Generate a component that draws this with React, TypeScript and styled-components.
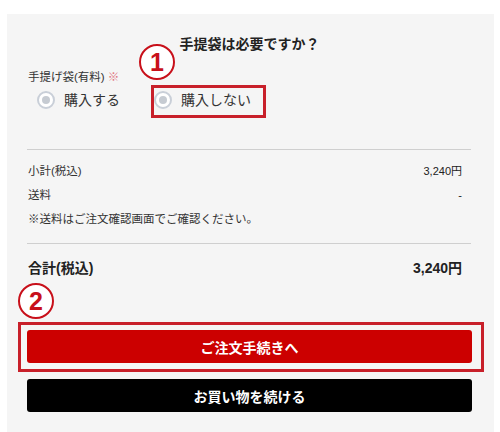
import React from "react";
import styled, { createGlobalStyle } from "styled-components";

const Global = createGlobalStyle`
  html, body { margin: 0; padding: 0; background: #fff; }
  body { font-family: "Liberation Sans", "Noto Sans CJK JP", sans-serif; color: #333; }
`;

const Page = styled.div`
  padding: 14px 6px 0 7px;
`;

const Panel = styled.section`
  position: relative;
  background: #f5f5f5;
  padding: 20px 22px 20px 20px;
`;

const Title = styled.h2`
  margin: 0;
  text-align: center;
  font-size: 14px;
  line-height: 20px;
  font-weight: bold;
  color: #222;
`;

const Label = styled.div`
  margin-top: 14px;
  font-size: 11.5px;
  line-height: 18px;
  padding-left: 1px;
`;

const Mark = styled.span`
  color: #e27682;
`;

const RadioRow = styled.div`
  margin-top: 2px;
  height: 24px;
  display: flex;
  align-items: center;
  gap: 34px;
  padding-left: 10px;
`;

const RadioItem = styled.label`
  display: flex;
  align-items: center;
  gap: 9px;
  font-size: 14px;
  line-height: 20px;
  color: #333;
`;

const RadioDot = styled.span`
  width: 18px;
  height: 18px;
  box-sizing: border-box;
  border-radius: 50%;
  border: 2px solid #c9cfd8;
  background: #fff;
  display: flex;
  align-items: center;
  justify-content: center;
  &::after {
    content: "";
    width: 8px;
    height: 8px;
    border-radius: 50%;
    background: #c6cbd2;
  }
`;

const Divider = styled.hr<{ $top: number }>`
  margin: ${(p) => p.$top}px 1px 0 0;
  border: 0;
  border-top: 1px solid #cfcfcf;
  height: 0;
`;

const Rows = styled.div`
  margin-top: 11px;
  display: flex;
  flex-direction: column;
  gap: 4px;
`;

const Row = styled.div`
  display: flex;
  justify-content: space-between;
  align-items: center;
  font-size: 11.5px;
  line-height: 20px;
  padding: 0 10px 0 1px;
  color: #333;
`;

const Value = styled.span`
  font-size: 11px;
  color: #222;
`;

const TotalRow = styled.div`
  margin-top: 12px;
  display: flex;
  justify-content: space-between;
  align-items: center;
  line-height: 24px;
  font-size: 14px;
  font-weight: bold;
  padding: 0 10px 0 1px;
  color: #222;
`;

const Button = styled.button<{ $bg: string; $top: number }>`
  display: block;
  width: 100%;
  height: 33px;
  margin-top: ${(p) => p.$top}px;
  border: 0;
  border-radius: 3px;
  background: ${(p) => p.$bg};
  color: #fff;
  font-family: "Liberation Sans", "Noto Sans CJK JP", sans-serif;
  font-size: 14px;
  font-weight: bold;
  cursor: pointer;
`;

const Highlight = styled.div<{ $l: number; $t: number; $w: number; $h: number }>`
  position: absolute;
  left: ${(p) => p.$l}px;
  top: ${(p) => p.$t}px;
  width: ${(p) => p.$w}px;
  height: ${(p) => p.$h}px;
  box-sizing: border-box;
  border: 3px solid #c8202a;
  pointer-events: none;
`;

const Badge = styled.div<{ $l: number; $t: number }>`
  position: absolute;
  left: ${(p) => p.$l}px;
  top: ${(p) => p.$t}px;
  width: 36px;
  height: 36px;
  box-sizing: border-box;
  border: 2px solid #c8101a;
  border-radius: 50%;
  background: #fff;
  display: flex;
  align-items: center;
  justify-content: center;
  color: #c8101a;
  font-family: "Liberation Sans", sans-serif;
  font-weight: bold;
  font-size: 25px;
  line-height: 1;
`;

export default function App() {
  return (
    <Page>
      <Global />
      <Panel>
        <Title>手提袋は必要ですか？</Title>
        <Label>
          手提げ袋(有料) <Mark>※</Mark>
        </Label>
        <RadioRow>
          <RadioItem>
            <RadioDot />
            購入する
          </RadioItem>
          <RadioItem>
            <RadioDot />
            購入しない
          </RadioItem>
        </RadioRow>
        <Divider $top={37} />
        <Rows>
          <Row>
            <span>小計(税込)</span>
            <Value>3,240円</Value>
          </Row>
          <Row>
            <span>送料</span>
            <Value>-</Value>
          </Row>
          <Row>
            <span>※送料はご注文確認画面でご確認ください。</span>
          </Row>
        </Rows>
        <Divider $top={14} />
        <TotalRow>
          <span>合計(税込)</span>
          <span>3,240円</span>
        </TotalRow>
        <Button $bg="#cc0000" $top={50}>ご注文手続きへ</Button>
        <Button $bg="#000" $top={16}>お買い物を続ける</Button>

        <Badge $l={132} $t={30}>1</Badge>
        <Highlight $l={144} $t={71} $w={115} $h={33} />
        <Badge $l={11} $t={269}>2</Badge>
        <Highlight $l={11} $t={308} $w={466} $h={50} />
      </Panel>
    </Page>
  );
}
